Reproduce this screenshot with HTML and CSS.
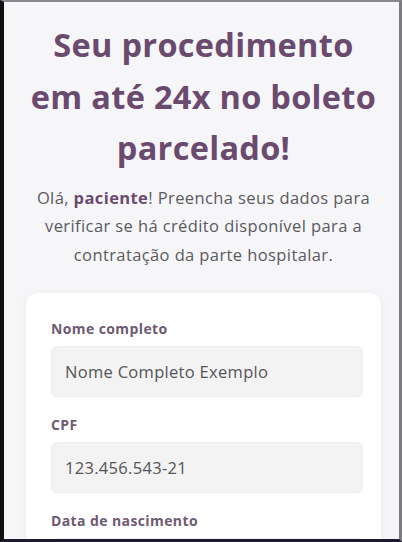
FILE: index.html
```html
<!DOCTYPE html>
<html lang="pt-BR">
<head>
<meta charset="utf-8">
<title>Boleto parcelado</title>
<link rel="stylesheet" href="styles.css">
</head>
<body>
<div class="frame">
  <main class="page">
    <h1 class="title">Seu procedimento<br>em até 24x no boleto<br>parcelado!</h1>
    <p class="intro">Olá, <strong>paciente</strong>! Preencha seus dados para<br>verificar se há crédito disponível para a<br>contratação da parte hospitalar.</p>
    <form class="card">
      <div class="field">
        <label class="label">Nome completo</label>
        <div class="input">Nome Completo Exemplo</div>
      </div>
      <div class="field">
        <label class="label">CPF</label>
        <div class="input">123.456.543-21</div>
      </div>
      <div class="field">
        <label class="label">Data de nascimento</label>
        <div class="input input-dark"></div>
      </div>
    </form>
  </main>
</div>
</body>
</html>
```
FILE: styles.css
```css
html, body {
  margin: 0;
  padding: 0;
  height: 100%;
  overflow: hidden;
  background: #1a1a22;
}
.frame {
  box-sizing: border-box;
  height: 542px;
  width: 402px;
  border-left: 4px solid #111;
  border-top: 2px solid #8a8a8e;
  border-right: 3px solid #7c7c80;
  border-bottom: 3px solid #1c1a2e;
  background: #f6f6f8;
  overflow: hidden;
}
.page {
  padding: 17px 18px 0 22px;
  font-family: "Open Sans", "Liberation Sans", sans-serif;
}
.title {
  margin: 0;
  text-align: center;
  color: #6b4a6f;
  font-family: "Open Sans", sans-serif;
  font-weight: 700;
  font-size: 32.5px;
  line-height: 51.5px;
  letter-spacing: 0.3px;
}
.intro {
  margin: 10px 0 0;
  text-align: center;
  color: #5a5a5e;
  font-size: 16.5px;
  line-height: 28.5px;
  letter-spacing: 0.4px;
  white-space: nowrap;
}
.intro strong {
  color: #6b4a6f;
  font-weight: 700;
}
.card {
  margin: 24px 0 0 0;
  background: #fff;
  border-radius: 12px;
  box-shadow: 0 2px 10px rgba(0,0,0,0.05);
  padding: 27px 18px 0 25px;
  display: flex;
  flex-direction: column;
  gap: 19px;
}
.field {
  display: flex;
  flex-direction: column;
  gap: 9px;
}
.label {
  color: #6e5a72;
  font-weight: 700;
  font-size: 14px;
  line-height: 17px;
  letter-spacing: 0.4px;
}
.input {
  box-sizing: border-box;
  height: 51px;
  background: #f3f3f3;
  border: 1px solid #ececec;
  border-radius: 6px;
  padding: 0 13px;
  display: flex;
  align-items: center;
  color: #555;
  font-size: 16.5px;
  letter-spacing: 0.3px;
}
.input-dark {
  background: linear-gradient(90deg, #3a3050 0%, #6b5a7a 50%, #b58a5a 100%);
}
```
